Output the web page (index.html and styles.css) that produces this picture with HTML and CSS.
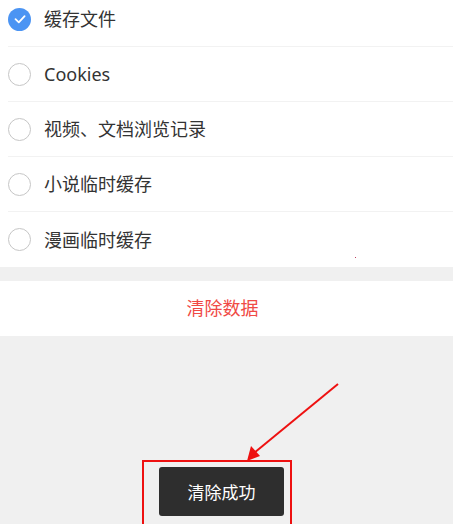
FILE: index.html
```html
<!DOCTYPE html>
<html lang="zh-CN">
<head>
    <meta charset="UTF-8">
    <meta name="viewport" content="width=device-width, initial-scale=1.0">
    <title>清除缓存</title>
    <link rel="stylesheet" href="styles.css">
</head>
<body>
    <section class="options">
        <div class="option checked">
            <span class="radio">
                <svg viewBox="0 0 22 22" width="22" height="22">
                    <path d="M6.5 11.2 L9.8 14.3 L15.6 8.2" fill="none" stroke="#fff" stroke-width="1.8" stroke-linecap="round" stroke-linejoin="round"/>
                </svg>
            </span>
            <span class="label">缓存文件</span>
        </div>
        <div class="option">
            <span class="radio"></span>
            <span class="label">Cookies</span>
        </div>
        <div class="option">
            <span class="radio"></span>
            <span class="label">视频、文档浏览记录</span>
        </div>
        <div class="option">
            <span class="radio"></span>
            <span class="label">小说临时缓存</span>
        </div>
        <div class="option">
            <span class="radio"></span>
            <span class="label">漫画临时缓存</span>
        </div>
    </section>

    <section class="action">
        <button class="clear-btn">清除数据</button>
    </section>

    <!-- toast -->
    <div class="toast">清除成功</div>

    <!-- annotation -->
    <div class="mark-box"></div>
    <svg class="mark-arrow" width="453" height="524" viewBox="0 0 453 524">
        <line x1="338" y1="384" x2="254" y2="453" stroke="#ee1111" stroke-width="2"/>
        <polygon points="247,461 251,446 260,456" fill="#ee1111"/>
    </svg>
    <span class="dot"></span>
</body>
</html>
```

FILE: styles.css
```css
body {
    margin: 0;
    padding: 0;
    width: 453px;
    height: 524px;
    overflow: hidden;
    position: relative;
    background-color: #f0f0f0;
    font-family: "Noto Sans", "Noto Sans CJK SC", sans-serif;
    color: #333;
}

.options {
    background-color: #fff;
    margin-top: -8px;
}

.option {
    display: flex;
    align-items: center;
    height: 54px;
    margin-left: 8px;
    border-bottom: 1px solid #f2f2f2;
}

.option:last-child {
    border-bottom: none;
    height: 55px;
}

.radio {
    box-sizing: border-box;
    width: 23px;
    height: 23px;
    border-radius: 50%;
    border: 1.5px solid #c6c6c6;
    margin-right: 13px;
    display: flex;
    align-items: center;
    justify-content: center;
}

.option.checked .radio {
    border: none;
    background-color: #4b94f3;
}

.label {
    font-size: 18px;
    line-height: 24px;
}

.action {
    margin-top: 14px;
    background-color: #fff;
    height: 55px;
    display: flex;
    align-items: center;
    justify-content: center;
}

.clear-btn {
    border: none;
    background: none;
    font-family: inherit;
    font-size: 18px;
    color: #f04a45;
    padding: 0;
    margin-left: -8px;
    margin-top: -3px;
}

.toast {
    position: absolute;
    left: 159px;
    top: 467px;
    width: 125px;
    height: 49px;
    border-radius: 3px;
    background-color: #2e2e2e;
    color: #fff;
    font-size: 17px;
    display: flex;
    align-items: center;
    justify-content: center;
}

.mark-box {
    position: absolute;
    left: 142px;
    top: 460px;
    width: 146px;
    height: 80px;
    border: 2px solid #ee1111;
}

.mark-arrow {
    position: absolute;
    left: 0;
    top: 0;
}

.dot {
    position: absolute;
    left: 355px;
    top: 257px;
    width: 1px;
    height: 1px;
    background-color: #c04060;
}
```
